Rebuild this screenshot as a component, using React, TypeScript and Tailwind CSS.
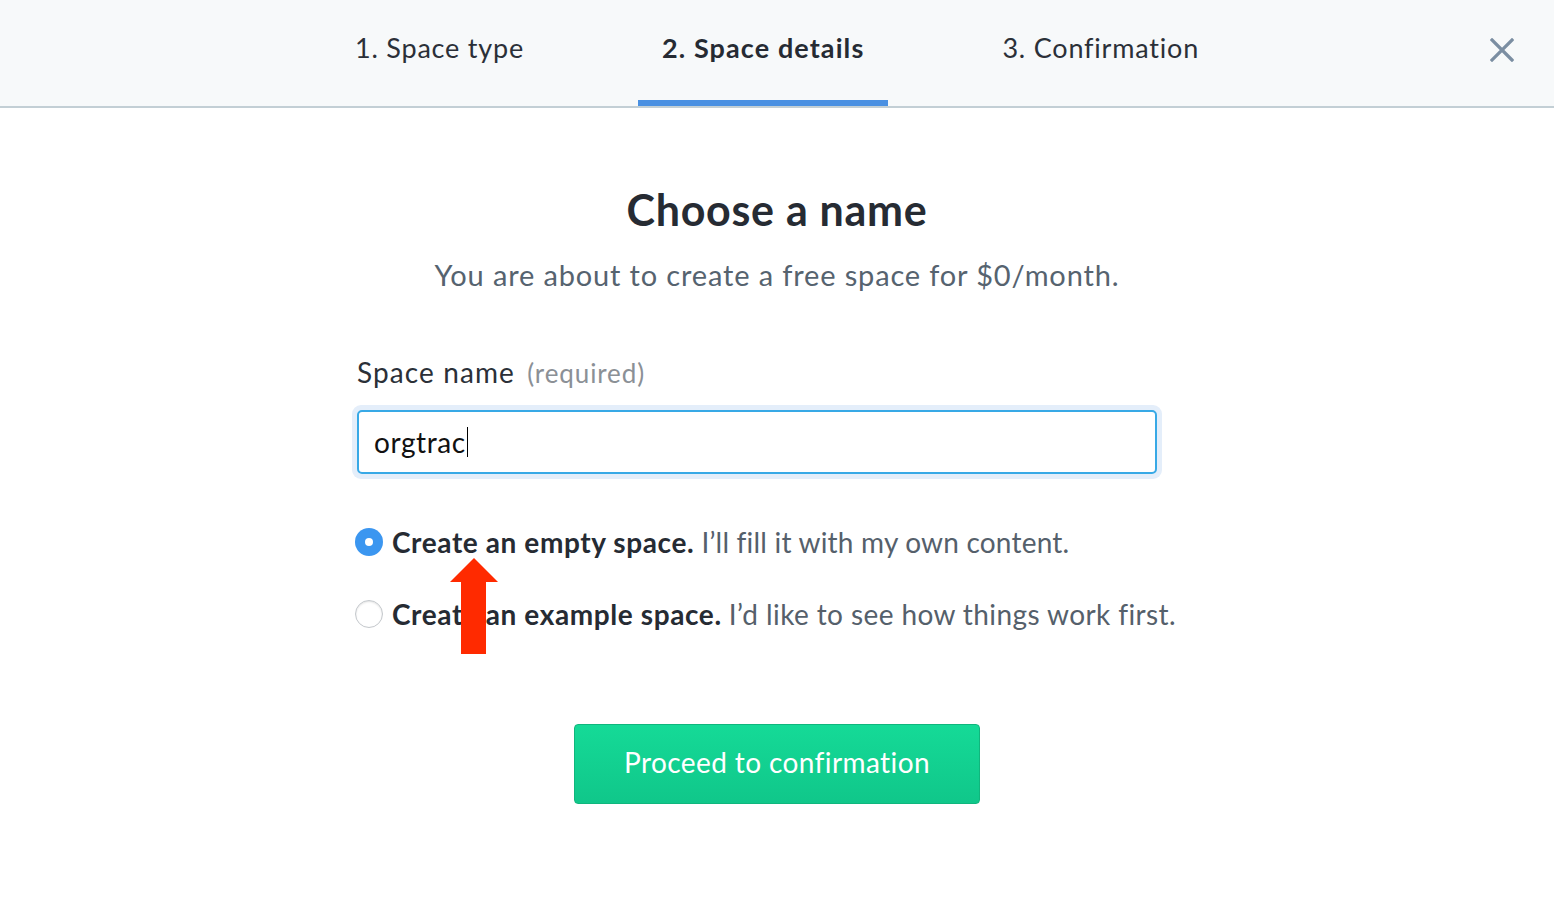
import React from "react";

const FONT = { fontFamily: "Lato, 'Open Sans', sans-serif" };

const STEPS = [
  { id: 1, label: "1. Space type", active: false },
  { id: 2, label: "2. Space details", active: true },
  { id: 3, label: "3. Confirmation", active: false },
];

function RadioDot({ checked }: { checked: boolean }) {
  if (checked) {
    return (
      <span className="w-[28px] h-[28px] rounded-full bg-[#3b96f0] flex items-center justify-center shrink-0">
        <span className="w-[8px] h-[8px] rounded-full bg-white" />
      </span>
    );
  }
  return (
    <span className="w-[28px] h-[28px] rounded-full bg-white border border-[#c4c8cc] shadow-[inset_0_1px_2px_rgba(0,0,0,0.12)] shrink-0" />
  );
}

export default function App() {
  return (
    <div className="min-h-[914px] bg-white" style={FONT}>
      {/* Step header */}
      <header className="relative h-[108px] bg-[#f7f9fa] border-b-2 border-[#c3cfd5] flex justify-center gap-[90px]">
        {STEPS.map((step) => (
          <div
            key={step.id}
            className={
              "h-full px-[24px] flex items-start pt-[28px] text-[27px] " +
              (step.active
                ? "border-b-[6px] border-[#4a90e2] font-bold text-[#262b33] tracking-[1.1px]"
                : "text-[#2b3038] tracking-[0.8px]")
            }
          >
            {step.label}
          </div>
        ))}
        <button className="absolute right-[40px] top-[38px] text-[#7b8ea2]" aria-label="Close">
          <svg width="24" height="24" viewBox="0 0 24 24" fill="none" stroke="currentColor" strokeWidth="3.2" strokeLinecap="square">
            <path d="M2 2L22 22M22 2L2 22" />
          </svg>
        </button>
      </header>

      {/* Form */}
      <main className="w-[840px] mx-auto pt-[77px]">
        <h1 className="text-center text-[43px] font-bold text-[#262b33] leading-[50px] tracking-[0.7px]">
          Choose a name
        </h1>
        <p className="text-center text-[29px] text-[#56636f] mt-[22px] leading-[36px] tracking-[0.85px]">
          You are about to create a free space for $0/month.
        </p>

        <label className="block mt-[62px] text-[28px] text-[#2b3038] leading-[34px] tracking-[1.1px]">
          Space name{" "}
          <span className="ml-[4px] text-[26px] text-[#8b9096] tracking-[0.9px]">(required)</span>
        </label>
        <div className="mt-[15px] w-[810px] -ml-[5px] p-[5px] rounded-[9px] bg-[#e4eefa]">
          <div className="h-[64px] rounded-[5px] border-2 border-[#38a9e6] bg-white flex items-center px-[15px] text-[28px] text-[#111] tracking-[0.6px]">
            orgtrac
            <span className="w-[1.5px] h-[30px] bg-black ml-[1px]" />
          </div>
        </div>

        <div className="relative mt-[49px] flex flex-col gap-[44px]">
          <div className="flex items-center gap-[9px] h-[28px] -ml-[2px] text-[28px]">
            <RadioDot checked />
            <span>
              <span className="font-bold text-[#262b33] tracking-[0.6px]">Create an empty space.</span>{" "}
              <span className="text-[#55606b] tracking-[0.2px]">I’ll fill it with my own content.</span>
            </span>
          </div>
          <div className="flex items-center gap-[9px] h-[28px] -ml-[2px] text-[28px]">
            <RadioDot checked={false} />
            <span>
              <span className="font-bold text-[#262b33] tracking-[0.6px]">Create an example space.</span>{" "}
              <span className="text-[#55606b] tracking-[0.4px]">I’d like to see how things work first.</span>
            </span>
          </div>

          {/* Annotation arrow */}
          <svg
            className="absolute left-[92px] top-[30px]"
            width="50"
            height="96"
            viewBox="0 0 50 96"
          >
            <polygon points="25,0 49,24 37,24 37,96 12,96 12,24 1,24" fill="#ff2a00" />
          </svg>
        </div>

        <div className="flex justify-center mt-[96px]">
          <button className="w-[406px] h-[80px] pb-[5px] rounded-[4px] border border-[#10b67d] bg-gradient-to-b from-[#15da97] to-[#10c78a] text-white text-[28px] tracking-[0.4px]">
            Proceed to confirmation
          </button>
        </div>
      </main>
    </div>
  );
}
